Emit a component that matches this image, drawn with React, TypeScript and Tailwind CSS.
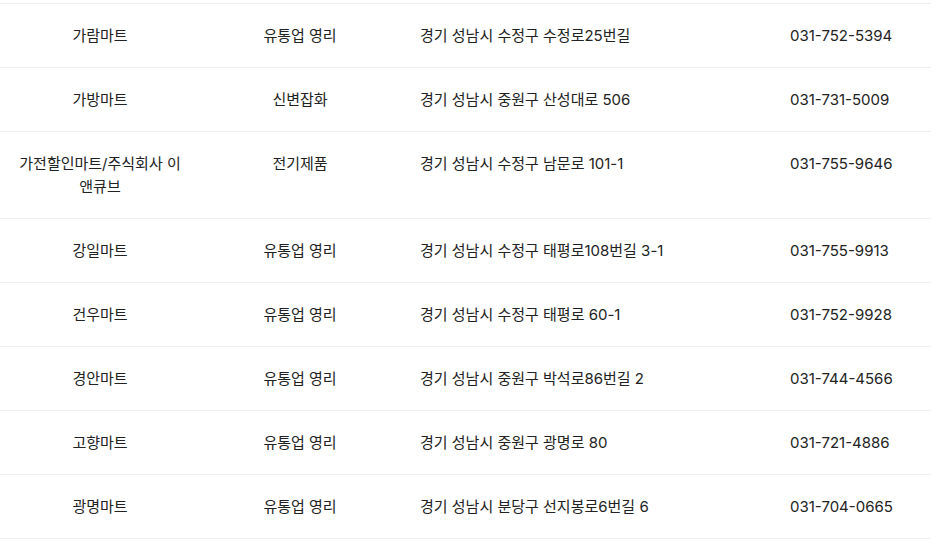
import React from "react";

const rows: [string, string, string, string][] = [
  ["가람마트", "유통업 영리", "경기 성남시 수정구 수정로25번길", "031-752-5394"],
  ["가방마트", "신변잡화", "경기 성남시 중원구 산성대로 506", "031-731-5009"],
  ["가전할인마트/주식회사 이앤큐브", "전기제품", "경기 성남시 수정구 남문로 101-1", "031-755-9646"],
  ["강일마트", "유통업 영리", "경기 성남시 수정구 태평로108번길 3-1", "031-755-9913"],
  ["건우마트", "유통업 영리", "경기 성남시 수정구 태평로 60-1", "031-752-9928"],
  ["경안마트", "유통업 영리", "경기 성남시 중원구 박석로86번길 2", "031-744-4566"],
  ["고향마트", "유통업 영리", "경기 성남시 중원구 광명로 80", "031-721-4886"],
  ["광명마트", "유통업 영리", "경기 성남시 분당구 선지봉로6번길 6", "031-704-0665"],
];

export default function App() {
  return (
    <div
      className="w-[940px] h-[539px] overflow-hidden bg-white text-[15px] leading-[23px] text-[#222]"
      style={{ fontFamily: 'Inter, "Noto Sans CJK KR", sans-serif' }}
    >
      <div className="w-[931px]">
        <div className="h-[4px] border-b border-[#eeeeee]" />
        {rows.map((r, i) => (
          <div key={i} className="grid grid-cols-[200px_200px_370px_161px] border-b border-[#eeeeee]">
            <div className="px-[15px] py-[20px] text-center">{r[0]}</div>
            <div className="px-[20px] py-[20px] text-center">{r[1]}</div>
            <div className="px-[20px] py-[20px]">{r[2]}</div>
            <div className="px-[20px] py-[20px]">{r[3]}</div>
          </div>
        ))}
      </div>
    </div>
  );
}
